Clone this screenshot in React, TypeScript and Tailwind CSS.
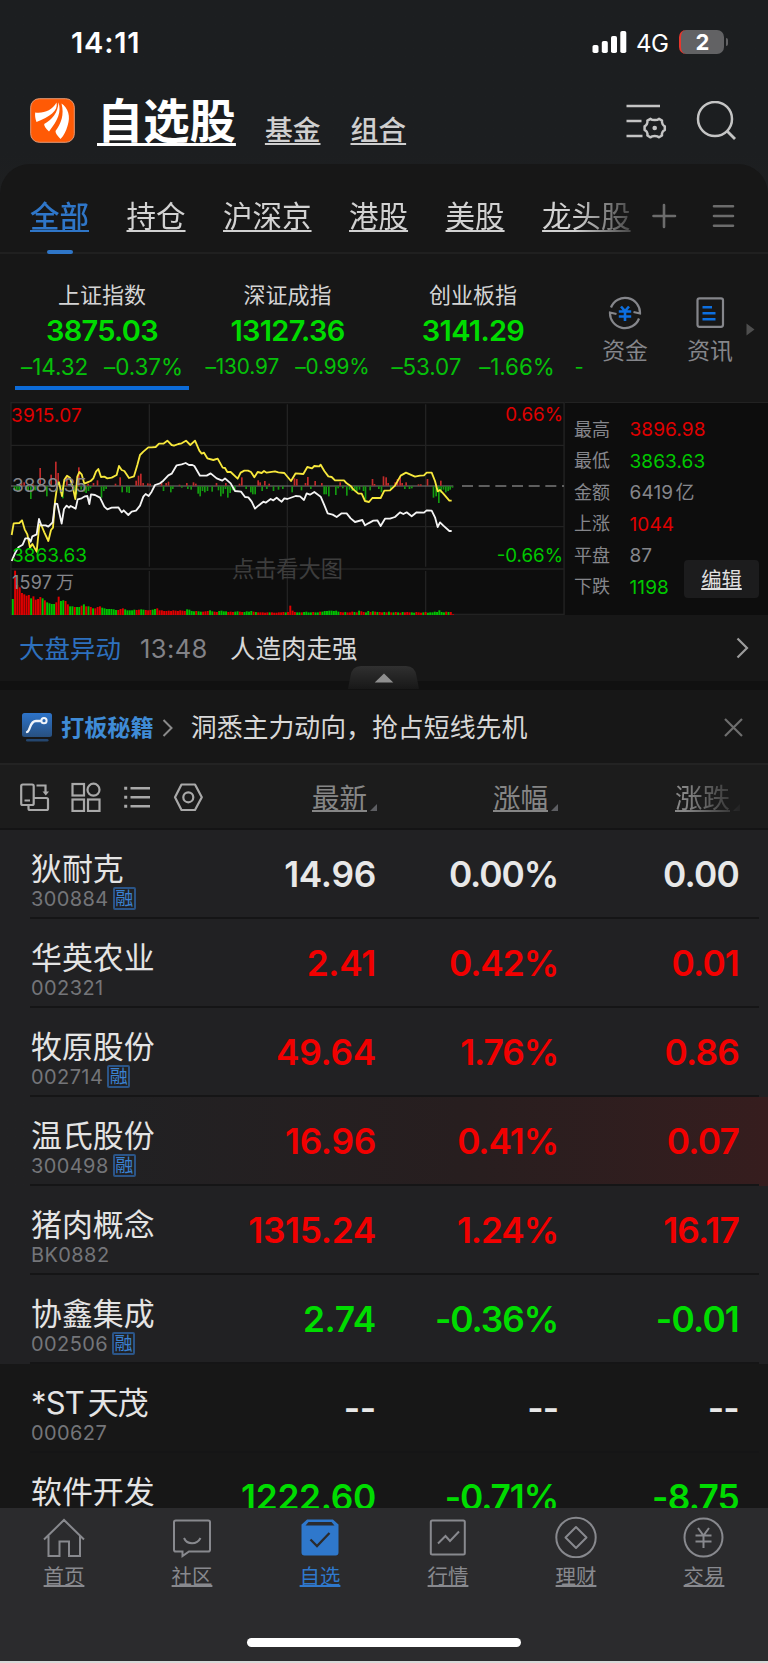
import { ReactNode } from 'react'
import clsx from 'clsx'

const CHART_MID = 272;
const CHART_BASE = 660;

const YELLOW =
  '35,420 41,385 58,384 66,376 74,403 82,418 90,458 97,447 110,470 118,390 125,393 133,412 145,438 153,405 159,398 165,320 172,270 177,262 186,303 193,254 201,242 210,248 218,275 226,312 232,245 238,231 245,238 253,266 262,262 272,258 280,250 288,230 295,222 303,246 313,245 322,250 335,248 350,240 357,213 365,225 373,228 387,249 402,244 412,210 420,180 430,170 445,157 455,157 467,156 477,146 490,146 502,137 515,150 522,152 535,147 545,145 558,137 571,150 585,137 598,167 605,176 612,173 622,190 640,195 653,191 668,218 675,219 682,231 692,231 713,251 722,233 733,227 744,227 753,231 763,247 773,231 785,234 792,228 800,233 825,229 835,232 853,234 873,258 887,235 910,237 922,216 936,220 943,213 958,214 962,209 973,228 985,244 995,246 1005,256 1032,256 1040,265 1053,274 1060,283 1075,296 1085,296 1095,318 1107,321 1117,309 1142,309 1153,287 1170,286 1185,272 1202,242 1218,233 1245,245 1260,242 1272,241 1280,233 1295,233 1305,258 1313,289 1320,285 1330,296 1348,317 1355,317';

const WHITE =
  '35,498 45,475 55,457 68,449 76,430 86,430 92,440 97,424 110,418 117,372 124,391 137,391 145,395 158,382 165,326 172,327 185,386 192,342 200,332 207,338 212,333 227,341 233,313 245,310 255,304 262,303 268,327 273,298 285,300 300,308 313,335 322,343 335,338 355,337 365,352 371,346 385,360 395,350 408,347 420,332 430,305 437,297 446,303 455,290 465,270 480,265 490,257 505,241 515,236 530,211 545,208 557,204 567,210 577,210 583,213 600,242 620,242 632,235 650,250 667,257 675,250 692,265 705,288 723,290 735,306 745,307 755,320 765,341 775,332 790,320 797,323 812,312 820,316 830,308 838,315 845,320 853,310 862,312 887,303 900,304 912,315 920,295 930,299 943,291 962,305 972,328 983,355 998,359 1010,366 1025,355 1040,355 1052,370 1065,381 1087,375 1095,391 1105,385 1120,377 1132,376 1142,393 1155,371 1170,371 1185,366 1200,352 1210,357 1220,352 1235,364 1250,352 1272,353 1280,346 1295,347 1305,367 1313,396 1320,382 1330,392 1348,408 1355,408';

const UP_BARS: number[][] = [
  [64, 8], [72, 10], [98, 4], [120, 53], [153, 33], [167, 72], [174, 38], [200, 28], [236, 55], [264, 6], [280, 8], [292, 16],
  [346, 6], [360, 25], [408, 15], [415, 30], [422, 36], [429, 8], [443, 7], [450, 6], [484, 8], [498, 8], [505, 12],
  [538, 3], [560, 8], [580, 10], [587, 6], [649, 8], [677, 8], [718, 6], [725, 25], [774, 16], [780, 10], [794, 14], [807, 6],
  [883, 22], [890, 20], [916, 8], [923, 26], [945, 14], [965, 8], [1020, 10], [1117, 20], [1123, 5], [1150, 28], [1158, 25],
  [1164, 8], [1185, 10], [1192, 20], [1200, 28], [1206, 8], [1218, 10], [1255, 4], [1262, 4], [1282, 20], [1322, 15],
];

const DOWN_BARS: number[][] = [
  [43, 12], [50, 14], [57, 14], [78, 12], [84, 14], [92, 38], [105, 12], [112, 12], [140, 30], [181, 20], [188, 36],
  [222, 12], [229, 24], [243, 10], [252, 16], [258, 20], [265, 14], [271, 6], [304, 34], [311, 14], [318, 8], [366, 18],
  [380, 18], [387, 20], [490, 14], [512, 18], [518, 8], [545, 4], [563, 8], [573, 10], [594, 22], [600, 30], [607, 14],
  [614, 18], [622, 14], [636, 16], [655, 12], [662, 30], [669, 22], [676, 8], [683, 34], [690, 20], [697, 12], [704, 12],
  [738, 8], [752, 18], [758, 24], [765, 24], [786, 14], [800, 8], [820, 14], [835, 10], [848, 8], [876, 18], [904, 12],
  [932, 8], [972, 24], [978, 24], [986, 30], [1007, 26], [1014, 6], [1028, 6], [1040, 28], [1048, 10], [1056, 14],
  [1064, 10], [1070, 16], [1078, 10], [1090, 14], [1096, 40], [1110, 12], [1136, 8], [1144, 18], [1172, 10], [1214, 8],
  [1228, 8], [1235, 6], [1300, 34], [1308, 30], [1316, 50], [1323, 20], [1330, 10], [1337, 18], [1344, 14], [1350, 10], [1357, 4],
];

// one entry per minute: height, then the colour of the same index below
const VOLUME = [
  48, 133, 90, 83, 66, 62, 58, 60, 50, 56, 46, 48, 54, 50, 44, 38, 35, 33, 33, 38, 55, 42, 44, 42, 32, 26, 26, 24, 24, 24, 28,
  32, 26, 26, 24, 20, 20, 24, 26, 22, 20, 18, 18, 18, 17, 15, 15, 18, 20, 17, 14, 14, 14, 16, 15, 16, 17, 16, 15, 14, 15, 16,
  18, 20, 14, 14, 12, 12, 13, 12, 14, 13, 12, 14, 13, 12, 17, 16, 12, 11, 12, 11, 10, 10, 11, 12, 14, 11, 10, 9, 12, 13, 11,
  11, 9, 10, 9, 10, 11, 10, 9, 9, 11, 10, 12, 10, 9, 8, 8, 8, 7, 8, 8, 8, 7, 7, 8, 8, 9, 8, 9, 28, 13, 9, 8, 8, 8, 9, 10, 8,
  8, 9, 8, 8, 10, 10, 12, 12, 13, 13, 12, 13, 10, 9, 8, 9, 8, 8, 10, 9, 8, 13, 11, 9, 8, 12, 9, 11, 10, 9, 9, 8, 9, 8, 10,
  8, 8, 9, 8, 7, 9, 8, 9, 8, 8, 7, 9, 8, 7, 8, 9, 7, 8, 8, 10, 9, 14, 9, 8, 10, 9, 9, 2,
];
const VOLUME_DIR =
  'grrrrrrrgrrrrgrggggrrggrrggrggrgrgrgrrrgggggggrrrgggggrrggrrrggrrrrrrrrrrrrrggggrggrrrggrrggggrrrggrrggggrgrrrrrgrrrrrrgrrrrggrggggrggrggggggggrrgrrrgrgrrggrgrgrrgrgrgrgrgrrrggrrrgrggggggggrgr';

const rows = [
  { name: '狄耐克', code: '300884', rong: true, price: '14.96', pct: '0.00%', diff: '0.00', tone: 'text-[#e8e8e8]' },
  { name: '华英农业', code: '002321', price: '2.41', pct: '0.42%', diff: '0.01', tone: 'text-[#f20000]' },
  { name: '牧原股份', code: '002714', rong: true, price: '49.64', pct: '1.76%', diff: '0.86', tone: 'text-[#f20000]' },
  { name: '温氏股份', code: '300498', rong: true, price: '16.96', pct: '0.41%', diff: '0.07', tone: 'text-[#f20000]', bg: 'bg-linear-to-r from-[#212123] from-15% via-[#271e1f] via-60% to-[#361d1e]' },
  { name: '猪肉概念', code: 'BK0882', price: '1315.24', pct: '1.24%', diff: '16.17', tone: 'text-[#f20000]' },
  { name: '协鑫集成', code: '002506', rong: true, price: '2.74', pct: '-0.36%', diff: '-0.01', tone: 'text-[#00dc00]' },
  { name: '*ST天茂', code: '000627', price: '--', pct: '--', diff: '--', tone: 'text-[#e8e8e8]', bg: 'bg-[#171717]', tight: true },
  { name: '软件开发', code: 'BK0737', price: '1222.60', pct: '-0.71%', diff: '-8.75', tone: 'text-[#00dc00]', bg: 'bg-[#171717]' },
];

const indices = [
  { name: '上证指数', value: '3875.03', diff: '–14.32', pct: '–0.37%', size: 'text-[22.5px] gap-[16px]', active: true },
  { name: '深证成指', value: '13127.36', diff: '–130.97', pct: '–0.99%', size: 'text-[20.8px] gap-[16px]' },
  { name: '创业板指', value: '3141.29', diff: '–53.07', pct: '–1.66%', size: 'text-[22.4px] gap-[18px]' },
];

const stats = [
  { label: '最高', value: '3896.98', tone: 'text-[#e00000]' },
  { label: '最低', value: '3863.63', tone: 'text-[#00c800]' },
  { label: '金额', value: '6419亿', tone: 'text-[#85868b]' },
  { label: '上涨', value: '1044', tone: 'text-[#e00000]' },
  { label: '平盘', value: '87', tone: 'text-[#85868b]' },
  { label: '下跌', value: '1198', tone: 'text-[#00c800]' },
];

const Link = ({ className, children }: { className?: string; children: ReactNode }) => (
  <span className={clsx('underline [text-decoration-skip-ink:none]', className)}>{children}</span>
);

const StatusBar = () => (
  <div className='flex h-[84px] items-center justify-between pl-[71px] pr-[40px] text-white'>
    <span className='text-[29px] font-semibold tracking-[0.800px]'>14:11</span>
    <div className='flex items-center'>
      <svg width='36' height='24' viewBox='0 0 36 24' fill='#fff'>
        <rect x='0.5' y='15' width='6' height='8' rx='1.8' />
        <rect x='9.8' y='11' width='6' height='12' rx='1.8' />
        <rect x='19' y='6' width='6' height='17' rx='1.8' />
        <rect x='28.3' y='1' width='6' height='22' rx='1.8' />
      </svg>
      <span className='ml-[8px] mt-[3px] w-[43px] text-[24px] tracking-[-0.4px]'>4G</span>
      <div className='flex h-[24px] w-[45px] items-center justify-center overflow-hidden rounded-[7px] border-l-2 border-[#e8362c] bg-[#626264] text-[22px] font-bold'>2</div>
      <span className='ml-[2px] h-[8px] w-[2px] rounded-r-full bg-[#626264]' />
    </div>
  </div>
);

const Header = () => (
  <div className='flex h-[80px] items-start pl-[30px] pt-[14px]'>
    <svg width='45' height='45' viewBox='0 0 45 45'>
      <rect x='0.7' y='0.7' width='43.6' height='43.6' rx='8.5' fill='#ff5a05' stroke='#e89a74' strokeWidth='1' />
      <g fill='#fff'>
        <path d='M5.2 14.5C14 15.5 22 12.500 26.500 4.500C28.500 13 19.500 19 6.500 24C5.200 20.500 4.800 17.500 5.200 14.500Z' />
        <path d='M28.500 4.300C31.500 14 28 22 19 33.500C15.500 30 14 28 14.200 26C22 21.500 28 15 28.500 4.300Z' />
        <path d='M31.500 5.500C38 10 41 18 37.500 28C36 33 34 37.500 30.500 41C27.500 38 25.500 35.500 25.500 33C31 25.500 34.500 17 31.500 5.500Z' />
      </g>
    </svg>
    <Link className='ml-[22px] text-[46.3px] font-semibold leading-[46px] text-white decoration-3 underline-offset-[5px]'>自选股</Link>
    <Link className='ml-[29px] mt-[18px] text-[27.8px] font-medium leading-[28px] text-[#cfcfcf] decoration-2 underline-offset-[3px]'>基金</Link>
    <Link className='ml-[30px] mt-[18px] text-[27.8px] font-medium leading-[28px] text-[#cfcfcf] decoration-2 underline-offset-[3px]'>组合</Link>
    <svg className='ml-auto mr-[32px] mt-[3px]' width='112' height='42' viewBox='624 101 112 42' fill='none' stroke='#c4c4c4' strokeWidth='2.5'>
      <path d='M626.500 106H660M626.500 121H641.500M626.500 136H642.500' />
      <path strokeLinejoin='round' d='M650.500 118.800C652 120.500 657.500 120.500 659 118.800L662 120.600C661.500 123 663.300 126 664.800 126.200V130C663 130.500 661.500 133 662 135.500L659 137.300C657.500 135.600 652 135.600 650.500 137.300L647.400 135.500C648 133 646.300 130.500 644.600 130V126.200C646.300 125.800 648 123 647.400 120.600Z' />
      <circle cx='654.700' cy='128' r='2.300' fill='#c4c4c4' stroke='none' />
      <circle cx='715' cy='119' r='17' />
      <path d='M727 131L735 139' strokeWidth='2.800' />
    </svg>
  </div>
);

const Tabs = () => (
  <div className='relative flex h-[90px] items-center border-b-2 border-[#202020] pl-[30px]'>
    <div className='mt-[16px] flex w-[608px] gap-[37.500px] whitespace-nowrap text-[29.5px] leading-[36px] text-[#d2d2d2] [mask-image:linear-gradient(to_right,#000_545px,transparent_620px)]'>
      <Link className='font-medium text-[#2f76c8] decoration-2 underline-offset-[3px]'>全部</Link>
      {['持仓', '沪深京', '港股', '美股', '龙头股'].map((tab) => (
        <Link key={tab} className='decoration-2 underline-offset-[3px]'>{tab}</Link>
      ))}
    </div>
    <svg className='mt-[16px] ml-[13px]' width='84' height='26' viewBox='651 203 84 26' stroke='#6c6c6c' strokeWidth='2.600' strokeLinecap='round'>
      <path d='M664 205V227M653.500 216H675M714 206.200H733M714 216H733M714 225.800H733' />
    </svg>
    <span className='absolute -bottom-[2px] left-[47px] h-[4px] w-[26px] rounded-sm bg-[#2f76c8]' />
  </div>
);

const Indices = () => (
  <div className='flex h-[148px] pl-[15px]'>
    <div className='flex w-[570px] gap-[11.500px] overflow-hidden'>
      {indices.map((item) => (
        <div key={item.name} className='flex w-[174px] shrink-0 flex-col items-center whitespace-nowrap pt-[29px]'>
          <p className='text-[22px] leading-[24px] text-[#d4d4d4]'>{item.name}</p>
          <p className='mt-[8px] text-[29px] font-semibold leading-[32px] tracking-[-0.700px] text-[#00dc00]'>{item.value}</p>
          <p className={clsx('mt-[8px] flex leading-[24px] tracking-[-0.1px] text-[#06c00a]', item.size)}>
            <span>{item.diff}</span>
            <span>{item.pct}</span>
          </p>
          {item.active && <span className='mt-[7px] h-[4px] w-full bg-[#0c6bd8]' />}
        </div>
      ))}
      <span className='ml-[3px] pt-[101px] text-[20px] leading-[24px] text-[#06c00a]'>-</span>
    </div>
    <div className='flex w-[80px] flex-col items-center pt-[42px] text-[22.800px] leading-[26px] text-[#85868b]'>
      <svg width='34' height='34' viewBox='0 0 34 34' fill='none' stroke='#85868b' strokeWidth='2.200'>
        <path d='M3 11.500A15 15 0 0 1 32 17.500L25.500 16' />
        <path d='M31 22.500A15 15 0 0 1 2 16.500L8.500 18' />
        <path d='M13 10.500L17 15L21 10.500M10.800 15.500H23.200M10.800 20.500H23.200M17 15V25' stroke='#0d6fe0' strokeWidth='2.600' />
      </svg>
      <span className='mt-[8px]'>资金</span>
    </div>
    <div className='ml-[5px] flex w-[80px] flex-col items-center pt-[42px] text-[22.800px] leading-[26px] text-[#85868b]'>
      <svg width='34' height='34' viewBox='0 0 34 34' fill='none' stroke='#85868b' strokeWidth='2.200'>
        <rect x='4.500' y='2.300' width='25.500' height='28.500' rx='2' />
        <path d='M9.500 11.300H19M9.500 17.300H22.500M9.500 23.300H22.500' stroke='#0d6fe0' strokeWidth='2.600' />
      </svg>
      <span className='mt-[8px]'>资讯</span>
    </div>
    <svg className='-ml-[4px] mt-[69px]' width='9' height='13' viewBox='0 0 9 13' fill='#4e4e4e'>
      <path d='M0.500 0.500L8.500 6.500L0.500 12.500Z' />
    </svg>
  </div>
);

const Chart = () => (
  <div className='relative h-[213px] w-[565px] text-[19px] leading-[20px]'>
    <svg width='565' height='213' viewBox='0 21 1695 639' fill='none'>
      <rect x='33' y='23' width='1659' height='635' fill='#0d0d0d' stroke='#222' strokeWidth='4' />
      <path d='M33 151H1692M33 395H1692M33 522H1692M448 28V515M448 528V658M862 28V515M862 528V658M1277 28V515M1277 528V658' stroke='#222' strokeWidth='4' />
      <path d={`M33 ${CHART_MID + 1}H1360`} stroke='#7a7a7a' strokeWidth='3' />
      <path d={`M1386 ${CHART_MID + 1}H1692`} stroke='#7a7a7a' strokeWidth='4' strokeDasharray='33 17' />
      {UP_BARS.map(([x, h]) => (
        <rect key={x} x={x - 2} y={CHART_MID - h} width='5' height={h} fill='#c02a2a' />
      ))}
      {DOWN_BARS.map(([x, h]) => (
        <rect key={x} x={x - 2} y={CHART_MID + 2} width='5' height={h} fill='#139a10' />
      ))}
      {VOLUME.map((h, i) => (
        <rect key={i} x={35.500 + i * 6.88} y={CHART_BASE - h} width='5.800' height={h} fill={VOLUME_DIR[i] === 'g' ? '#00c400' : '#e00000'} />
      ))}
      <polyline points={YELLOW} stroke='#f7e83c' strokeWidth='5.500' strokeLinejoin='round' />
      <polyline points={WHITE} stroke='#f4f4f4' strokeWidth='5.500' strokeLinejoin='round' />
    </svg>
    <span className='absolute left-[11px] top-[4px] tracking-[0.200px] text-[#e00000]'>3915.07</span>
    <span className='absolute right-[2px] top-[3px] text-[18.700px] text-[#e00000]'>0.66%</span>
    <span className='absolute left-[12px] top-[74px] text-[#85868b]'>3889.35</span>
    <span className='absolute left-[12px] top-[144px] text-[#00c800]'>3863.63</span>
    <span className='absolute right-[2px] top-[144px] text-[18.700px] text-[#00c800]'>-0.66%</span>
    <span className='absolute left-[12px] top-[171px] flex gap-[4px] text-[18px] text-[#85868b]'>
      <span className='tracking-[0.200px]'>1597</span>
      <span>万</span>
    </span>
    <span className='absolute left-[232px] top-[155px] text-[22.200px] leading-[24px] text-[#3d3d3d]'>点击看大图</span>
  </div>
);

const Stats = () => (
  <div className='relative flex-1 border-t border-[#222] bg-[#0d0d0d] pl-[9px] pt-[11px]'>
    {stats.map((s) => (
      <div key={s.label} className='flex h-[31.500px] items-center'>
        <span className='w-[55.500px] text-[18px] text-[#85868b]'>{s.label}</span>
        <span className={clsx('text-[19px] tracking-[0.100px] [text-autospace:normal]', s.tone)}>{s.value}</span>
      </div>
    ))}
    <div className='absolute bottom-[17px] right-[9px] flex h-[38px] w-[75px] items-center justify-center rounded-[4px] bg-[#1c1c1d] pt-[2px] text-[20.300px] text-[#e0e0e0]'>
      <Link className='decoration-[1.500px] underline-offset-[1px]'>编辑</Link>
    </div>
  </div>
);

const News = () => (
  <div className='relative flex h-[75px] items-start border-b-[9px] border-[#111] pl-[19px] pt-[18px] text-[25.500px] leading-[32px]'>
    <span className='text-[#2d70be]'>大盘异动</span>
    <span className='ml-[19px] w-[90px] tracking-[0.400px] text-[#828287]'>13:48</span>
    <span className='text-[#d8d8d8]'>人造肉走强</span>
    <svg className='ml-auto mr-[19px] mt-[4px]' width='13' height='22' viewBox='0 0 13 22' fill='none' stroke='#9c9c9c' strokeWidth='2.200'>
      <path d='M1.500 1.500L11 11L1.500 20.500' />
    </svg>
    <svg className='absolute -bottom-[8px] left-[348px]' width='72' height='23' viewBox='0 0 72 23'>
      <defs>
        <linearGradient id='handle' x1='0' y1='0' x2='0' y2='1'>
          <stop offset='0' stopColor='#303030' />
          <stop offset='1' stopColor='#181818' />
        </linearGradient>
      </defs>
      <path d='M0 23L2.500 10Q4 0 13 0H58Q67 0 68.500 10L71 23Z' fill='url(#handle)' />
      <path d='M36 7.500L45.300 16.500H26.700Z' fill='#8f8f8f' />
    </svg>
  </div>
);

const Promo = () => (
  <div className='flex h-[75px] items-center border-b-2 border-[#232323] pl-[22px] pr-[25px] pt-[2px]'>
    <svg width='30' height='29' viewBox='0 0 30 29' fill='none'>
      <defs>
        <linearGradient id='promo' x1='0' y1='0' x2='0' y2='1'>
          <stop offset='0' stopColor='#2d74ca' />
          <stop offset='1' stopColor='#28507f' />
        </linearGradient>
      </defs>
      <rect width='30' height='24' rx='2.500' fill='url(#promo)' />
      <rect x='4' y='26' width='22.500' height='2.600' rx='1.300' fill='#24466f' />
      <path d='M5 19C8.500 18 7.500 8 14 8H19' stroke='#f0f4fa' strokeWidth='2.300' strokeLinecap='round' />
      <circle cx='22' cy='7.700' r='2.600' stroke='#f0f4fa' strokeWidth='2' />
    </svg>
    <span className='ml-[9px] text-[23.200px] font-bold leading-[28px] text-[#3f8bd6]'>打板秘籍</span>
    <svg className='ml-[8px]' width='11' height='18' viewBox='0 0 11 18' fill='none' stroke='#8a8a8a' strokeWidth='2'>
      <path d='M1.500 1L9.500 9L1.500 17' />
    </svg>
    <span className='ml-[18px] text-[25.900px] leading-[32px] text-[#d8d8d8]'>洞悉主力动向，抢占短线先机</span>
    <svg className='ml-auto' width='19' height='19' viewBox='0 0 19 19' stroke='#6e6e6e' strokeWidth='2.200'>
      <path d='M1 1L18 18M18 1L1 18' />
    </svg>
  </div>
);

const Sortable = ({ label, className }: { label: string; className: string }) => (
  <div className={clsx('flex items-center justify-end', className)}>
    <Link className='text-[27.500px] leading-[34px] text-[#868686] decoration-2 underline-offset-[2px]'>{label}</Link>
    <svg className='ml-[3px] mt-[19px]' width='7' height='7' viewBox='0 0 7 7' fill='#5d5e62'>
      <path d='M7 0V7H0Z' />
    </svg>
  </div>
);

const ColumnHeader = () => (
  <div className='flex h-[65px] items-center border-b-2 border-[#141415] bg-[#1c1c1c] pl-[20px]'>
    <svg width='184' height='30' viewBox='20 782 184 30' fill='none' stroke='#a9a9a9' strokeWidth='2.200'>
      <rect x='21.200' y='784.500' width='12.500' height='20.500' rx='1.500' />
      <path d='M24.500 800.500H30M36.500 785.500H45.500V793M34 798H46.500Q48 798 48 799.500V808.500Q48 810 46.500 810H30Q28.500 810 28.500 808.500V805' />
      <path d='M42.500 791.500H49L45.800 795.500Z' fill='#a9a9a9' stroke='none' />
      <rect x='72.500' y='784' width='11.500' height='11.500' />
      <circle cx='93.500' cy='789.700' r='6' />
      <rect x='72.500' y='799.500' width='11.500' height='11.500' />
      <rect x='88' y='799.500' width='11.500' height='11.500' />
      <path d='M130.500 788.300H150M130.500 797.300H150M130.500 806.300H150' strokeWidth='2.600' />
      <path d='M124.200 788.300H127.200M124.200 797.300H127.200M124.200 806.300H127.200' strokeWidth='3' />
      <path d='M181.500 784.500H195L201.800 797.300L195 810H181.500L175 797.300Z' strokeLinejoin='round' />
      <circle cx='188.300' cy='797.300' r='5' />
    </svg>
    <div className='flex pt-[2px]'>
      <Sortable label='最新' className='w-[173px]' />
      <Sortable label='涨幅' className='w-[181px]' />
      <Sortable label='涨跌' className='w-[182px] [mask-image:linear-gradient(to_right,#000_70%,transparent_104%)]' />
    </div>
  </div>
);

const StockRow = ({ row }: { row: (typeof rows)[number] }) => (
  <div className={clsx('h-[89px] shrink-0 pl-[30px] pr-[9px]', row.bg ?? 'bg-[#212123]')}>
    <div className='flex h-full border-b-2 border-[#151516]'>
      <div className='w-[170px] whitespace-nowrap pl-[1px] pt-[23px]'>
        <p className={clsx('text-[30.900px] leading-[32px] text-[#e4e4e4] [text-autospace:normal]', row.tight && 'tracking-[-0.800px]')}>{row.name}</p>
        <div className='mt-[2px] flex h-[23px] items-center gap-[4px] text-[20px] tracking-[0.400px] text-[#747579]'>
          {row.code}
          {row.rong && (
            <span className='flex h-[23px] w-[23px] items-center justify-center rounded-[2px] border-2 border-[#2b5588] text-[18px] leading-none tracking-normal text-[#3b82d2]'>融</span>
          )}
        </div>
      </div>
      <div className={clsx('flex items-center pt-[3px] text-right text-[35.300px] font-semibold leading-[40px] tracking-[-0.300px]', row.tone)}>
        <span className='w-[176px]'>{row.price}</span>
        <span className='w-[182px] tracking-[-1.100px]'>{row.pct}</span>
        <span className='w-[181px] tracking-[-0.800px]'>{row.diff}</span>
      </div>
    </div>
  </div>
);

const navItems = [
  {
    label: '首页',
    icon: <path d='M2 22L22 2.500L42 22M6.500 18.500V38.500H17.500V24H27V38.500H38V18.500' />,
  },
  {
    label: '社区',
    icon: <path d='M5.800 3H38.200Q40 3 40 4.800V32.200Q40 34 38.200 34H19L12.500 38.500V34H5.800Q4 34 4 32.200V4.800Q4 3 5.800 3ZM14 20.500C17 27.500 27 27.500 30.500 20.500' />,
  },
  {
    label: '自选',
    active: true,
    icon: (
      <>
        <path d='M4.500 7.500L9.500 3H34.500L39.500 7.500V35Q39.500 37 37.500 37H6.500Q4.500 37 4.500 35Z' fill='#2f78cc' stroke='#2f78cc' />
        <path d='M7.500 8L10.500 4.500H33.500L36.500 8Z' fill='#2b2b2d' stroke='none' />
        <path d='M12.500 22L19 28.500L31.500 15.500' stroke='#2b2b2d' strokeWidth='2.300' />
      </>
    ),
  },
  {
    label: '行情',
    icon: (
      <>
        <rect x='4.800' y='3' width='34' height='34' rx='1.500' />
        <path d='M12 26L19.500 18.500L24 23.500L33 14' />
      </>
    ),
  },
  {
    label: '理财',
    icon: (
      <>
        <circle cx='22' cy='20' r='19.700' />
        <path d='M22 9.500L32.500 20L22 30.500L11.500 20Z' strokeLinejoin='round' />
      </>
    ),
  },
  {
    label: '交易',
    icon: (
      <>
        <circle cx='21.500' cy='20' r='19' />
        <path d='M16 10.500L21.500 18L27 10.500M21.500 18V30.500M13.500 18H29.500M13.500 24H29.500' />
      </>
    ),
  },
];

const BottomNav = () => (
  <div className='flex h-[155px] flex-col items-center border-b-2 border-[#d8d8d8] bg-[#2b2b2d]'>
    <div className='flex w-full'>
      {navItems.map((item) => (
        <div key={item.label} className={clsx('flex w-[128px] flex-col items-center pt-[8px]', item.active ? 'text-[#2f78cc]' : 'text-[#88898e]')}>
          <svg width='44' height='42' viewBox='0 -1.500 44 42' fill='none' stroke='currentColor' strokeWidth='2'>
            {item.icon}
          </svg>
          <Link className='mt-[7px] text-[20.400px] leading-[24px] decoration-[1.500px] underline-offset-[1px]'>{item.label}</Link>
        </div>
      ))}
    </div>
    <span className='mt-[49px] h-[9px] w-[274px] rounded-full bg-white' />
  </div>
);

const App = () => {
  return (
    <div className='flex h-[1663px] w-[768px] flex-col overflow-hidden bg-[#171717] font-[Inter,"Noto_Sans_CJK_SC",sans-serif] leading-none'>
      <div className='bg-linear-to-b from-[#1c1e20] from-60% to-[#212121]'>
        <StatusBar />
        <Header />
        <div className='rounded-t-[30px] bg-[#171717]'>
          <Tabs />
        </div>
      </div>
      <Indices />
      <div className='flex'>
        <Chart />
        <Stats />
      </div>
      <News />
      <Promo />
      <ColumnHeader />
      <div className='flex min-h-0 flex-1 flex-col overflow-hidden'>
        {rows.map((row) => (
          <StockRow key={row.code} row={row} />
        ))}
      </div>
      <BottomNav />
    </div>
  );
};

export default App
